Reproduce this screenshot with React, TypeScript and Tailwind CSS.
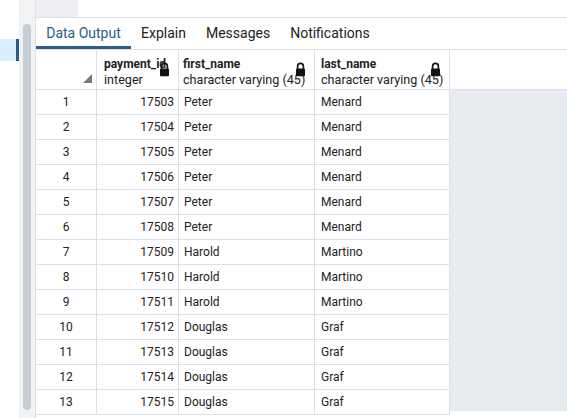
import React from 'react'

const rows: [number, number, string, string][] = [
  [1, 17503, 'Peter', 'Menard'],
  [2, 17504, 'Peter', 'Menard'],
  [3, 17505, 'Peter', 'Menard'],
  [4, 17506, 'Peter', 'Menard'],
  [5, 17507, 'Peter', 'Menard'],
  [6, 17508, 'Peter', 'Menard'],
  [7, 17509, 'Harold', 'Martino'],
  [8, 17510, 'Harold', 'Martino'],
  [9, 17511, 'Harold', 'Martino'],
  [10, 17512, 'Douglas', 'Graf'],
  [11, 17513, 'Douglas', 'Graf'],
  [12, 17514, 'Douglas', 'Graf'],
  [13, 17515, 'Douglas', 'Graf'],
]

const TABS = ['Data Output', 'Explain', 'Messages', 'Notifications']

function Lock() {
  return (
    <svg width="11" height="15" viewBox="0 0 11 15" className="absolute right-[8px] top-[12px]">
      <path d="M2.6 7V4.3a2.9 2.9 0 0 1 5.8 0V7" fill="none" stroke="#111" strokeWidth="1.6" />
      <rect x="1" y="6.6" width="9" height="7.6" rx="1" fill="#111" />
    </svg>
  )
}

function HeadCell({ name, type, w, pl }: { name: string; type: string; w: string; pl: string }) {
  return (
    <div className={`relative ${w} ${pl} shrink-0 border-r border-[#dde0e6] pt-[6px] leading-[16px] whitespace-nowrap`}>
      <div className="font-bold text-[12px] text-[#222]">{name}</div>
      <div className="text-[12.6px] text-[#222]">{type}</div>
      <Lock />
    </div>
  )
}

export default function App() {
  return (
    <div className="w-[567px] h-[418px] flex bg-white overflow-hidden font-['Roboto',sans-serif] text-[#222]">
      {/* left tree edge */}
      <div className="w-[19px] shrink-0 pt-[39px]">
        <div className="h-[22px] bg-[#dceefb] border-r-[3px] border-[#2c5d87]" />
      </div>
      {/* scroll gutter */}
      <div className="w-[17px] shrink-0 bg-[#f1f2f4] border-r border-[#dde0e6] pt-[24px] pb-[8px] pl-[4px] pr-[4px]">
        <div className="h-full rounded-[4px] bg-[#c8ccd4]" />
      </div>

      <div className="flex-1 flex flex-col min-w-0">
        <div className="h-[18px] shrink-0 flex border-b border-[#dde0e6]">
          <div className="w-[42px] bg-[#eceef1]" />
        </div>
        {/* tabs */}
        <div className="h-[32px] shrink-0 flex items-stretch border-b border-[#dde0e6] text-[14px] whitespace-nowrap">
          {TABS.map((t, i) =>
            i === 0 ? (
              <div key={t} className="w-[95px] flex items-center justify-center pt-[3px] border-b-[3px] border-[#2c5d87] text-[#2c5d87]">
                {t}
              </div>
            ) : (
              <div key={t} className="px-[10px] flex items-center text-[#222]">
                {t}
              </div>
            )
          )}
        </div>

        {/* grid */}
        <div className="flex-1 flex flex-col text-[12px]">
          <div className="h-[40px] shrink-0 flex border-b border-[#dde0e6]">
            <div className="relative w-[61px] shrink-0 border-r border-[#dde0e6]">
              <svg width="9" height="9" viewBox="0 0 9 9" className="absolute right-[4px] bottom-[6px]">
                <polygon points="9,0 9,9 0,9" fill="#7a7a7a" />
              </svg>
            </div>
            <HeadCell name="payment_id" type="integer" w="w-[82px]" pl="pl-[7px]" />
            <HeadCell name="first_name" type="character varying (45)" w="w-[136px]" pl="pl-[4px]" />
            <HeadCell name="last_name" type="character varying (45)" w="w-[135px]" pl="pl-[6px]" />
          </div>
          <div className="flex-1 flex">
            <div className="w-[414px] shrink-0">
              {rows.map(([n, id, f, l]) => (
                <div key={n} className="h-[25px] flex border-b border-[#dde0e6] leading-[24px]">
                  <div className="w-[61px] shrink-0 border-r border-[#dde0e6] text-center">{n}</div>
                  <div className="w-[82px] shrink-0 border-r border-[#dde0e6] text-right pr-[4px]">{id}</div>
                  <div className="w-[136px] shrink-0 border-r border-[#dde0e6] pl-[5px]">{f}</div>
                  <div className="w-[135px] shrink-0 border-r border-[#dde0e6] pl-[6px]">{l}</div>
                </div>
              ))}
            </div>
            <div className="flex-1 bg-[#e8ebef] mb-[7px]" />
          </div>
        </div>
      </div>
    </div>
  )
}
